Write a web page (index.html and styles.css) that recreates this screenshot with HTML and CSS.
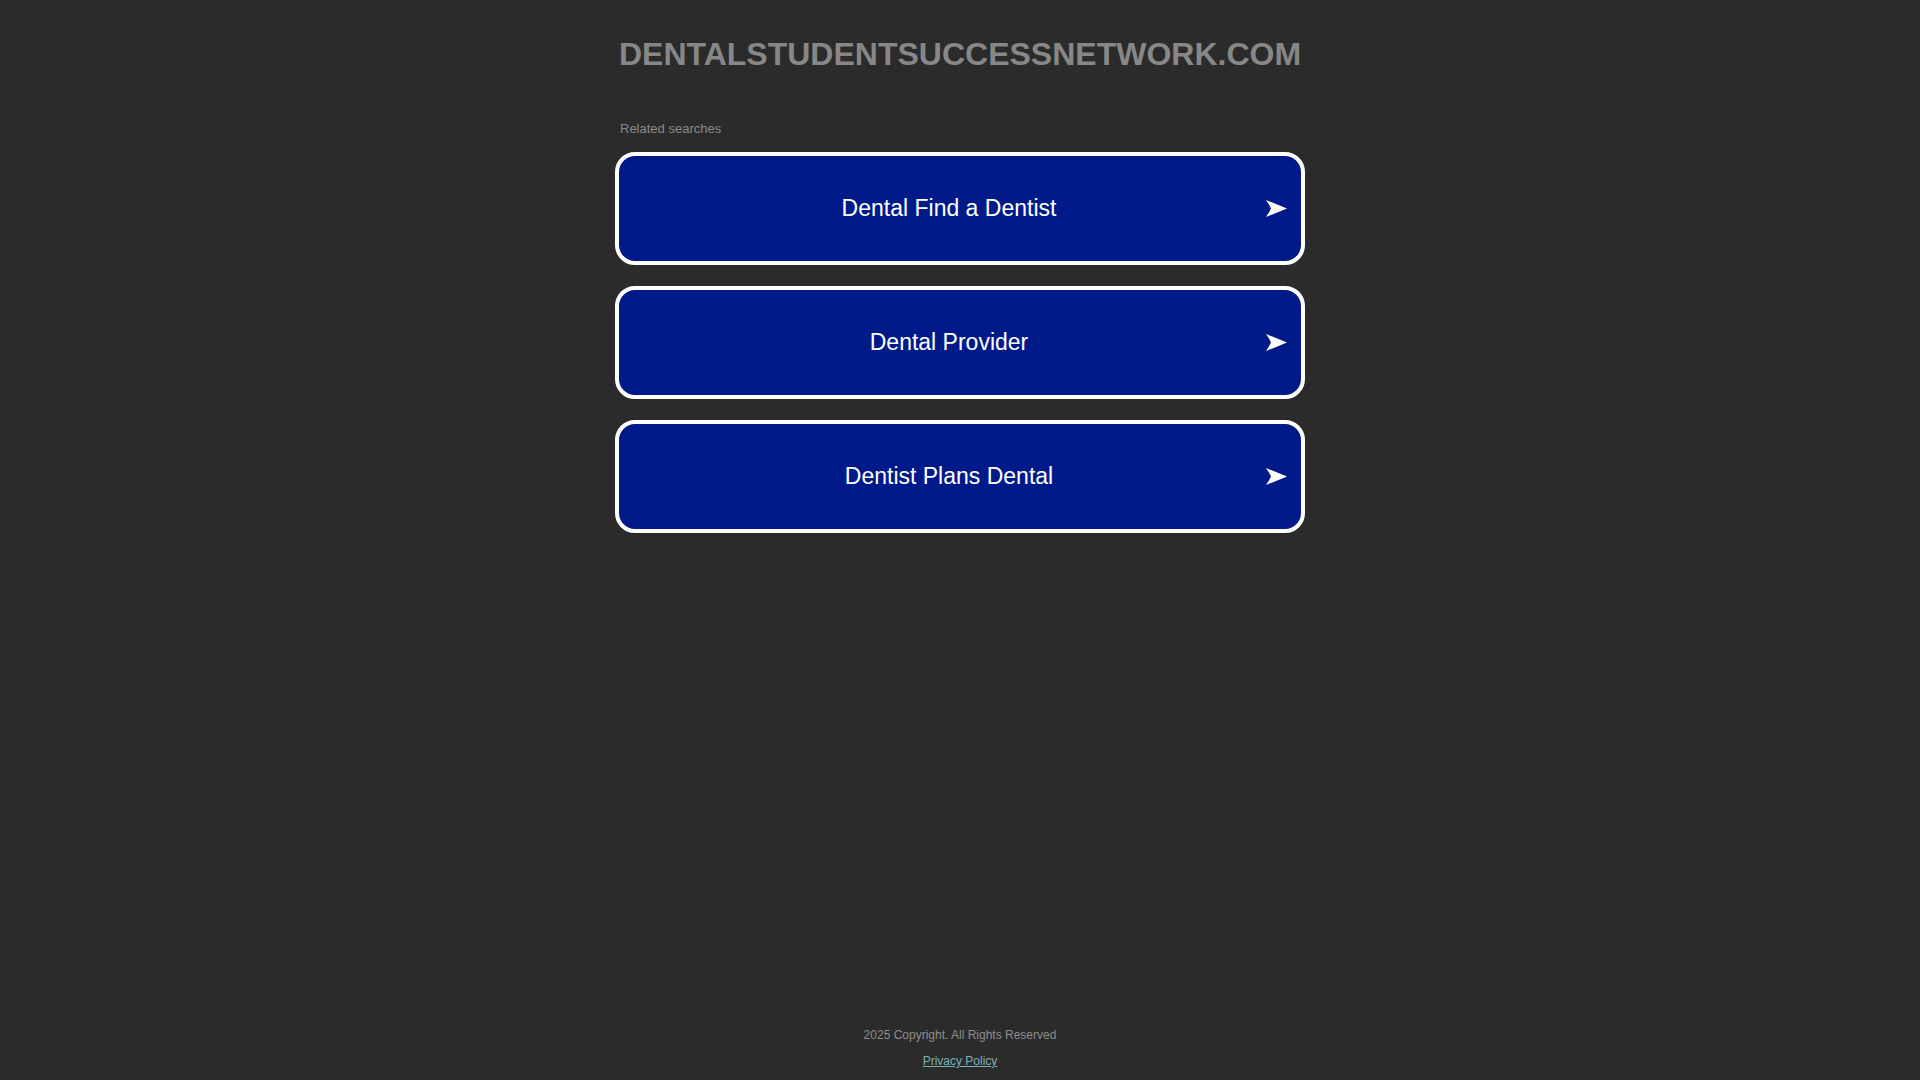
FILE: index.html
```html
<!DOCTYPE html>
<html lang="en">
<head>
<meta charset="utf-8">
<title>dentalstudentsuccessnetwork.com</title>
<link rel="stylesheet" href="styles.css">
</head>
<body>
<div class="page">
  <main class="container">
    <h1 class="domain">DENTALSTUDENTSUCCESSNETWORK.COM</h1>
    <div class="related">Related searches</div>
    <ul class="links">
      <li><a class="link" href="#"><span class="label">Dental Find a Dentist</span><svg class="arrow" viewBox="0 0 21 17" width="21" height="17"><path d="M0 0 L21 8.5 L0 17 Q3.5 12 5 8.5 Q3.5 5 0 0 Z" fill="#fff"/></svg></a></li>
      <li><a class="link" href="#"><span class="label">Dental Provider</span><svg class="arrow" viewBox="0 0 21 17" width="21" height="17"><path d="M0 0 L21 8.5 L0 17 Q3.5 12 5 8.5 Q3.5 5 0 0 Z" fill="#fff"/></svg></a></li>
      <li><a class="link" href="#"><span class="label">Dentist Plans Dental</span><svg class="arrow" viewBox="0 0 21 17" width="21" height="17"><path d="M0 0 L21 8.5 L0 17 Q3.5 12 5 8.5 Q3.5 5 0 0 Z" fill="#fff"/></svg></a></li>
    </ul>
  </main>
  <footer class="footer">
    <div class="copyright">2025 Copyright. All Rights Reserved</div>
    <a class="privacy" href="#">Privacy Policy</a>
  </footer>
</div>
</body>
</html>
```

FILE: styles.css
```css
html, body {
  margin: 0;
  padding: 0;
  background: #2b2b2b;
  font-family: "Liberation Sans", Arial, sans-serif;
}
.page {
  min-height: 100vh;
  display: flex;
  flex-direction: column;
  align-items: center;
}
.container {
  width: 690px;
  display: flex;
  flex-direction: column;
}
.domain {
  margin: 35px 0 0;
  font-size: 32px;
  line-height: 38px;
  font-weight: bold;
  color: #878787;
  text-align: center;
  white-space: nowrap;
}
.related {
  margin: 48px 0 0 5px;
  font-size: 13px;
  line-height: 16px;
  color: #8a8a8a;
}
.links {
  list-style: none;
  margin: 15px 0 0;
  padding: 0;
  display: flex;
  flex-direction: column;
  gap: 21px;
}
.link {
  position: relative;
  display: flex;
  align-items: center;
  justify-content: center;
  height: 113px;
  box-sizing: border-box;
  padding: 0 42px 0 20px;
  background: #011a8a;
  border: 4px solid #fff;
  border-radius: 20px;
  color: #fff;
  text-decoration: none;
}
.label {
  font-size: 23px;
  line-height: 27px;
}
.arrow {
  position: absolute;
  right: 14px;
  top: 50%;
  margin-top: -8.5px;
}
.footer {
  margin-top: auto;
  padding-bottom: 11px;
  display: flex;
  flex-direction: column;
  align-items: center;
  gap: 11px;
  font-size: 12px;
  line-height: 15px;
}
.copyright {
  color: #8e8e8e;
}
.privacy {
  color: #7bb1b6;
  text-decoration: underline;
}
```
